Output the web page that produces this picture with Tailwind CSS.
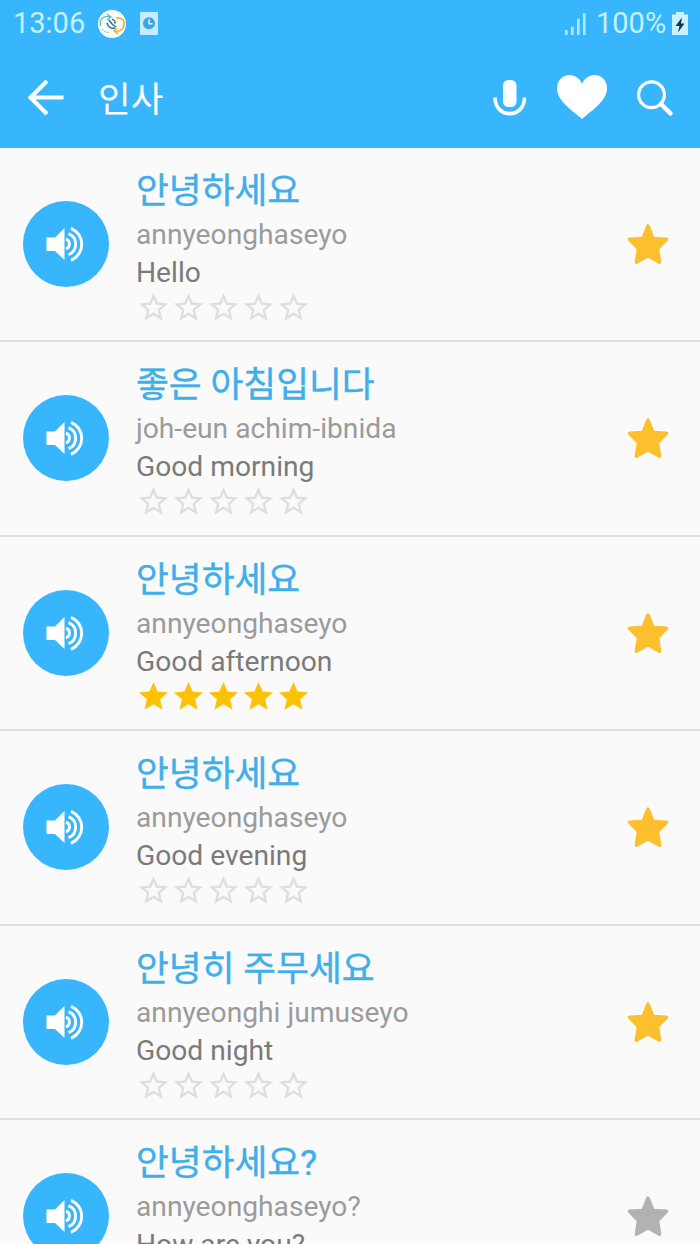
<!DOCTYPE html>
<html lang="ko">
<head>
    <meta charset="UTF-8">
    <meta name="viewport" content="width=device-width, initial-scale=1.0">
    <title>인사</title>
    <script src="https://cdn.jsdelivr.net/npm/@tailwindcss/browser@4"></script>
</head>
<body class="h-[1244px] overflow-hidden bg-[#fafafa] font-[Roboto,'Noto_Sans_CJK_KR',sans-serif]">
    <!-- Icon sprite -->
    <svg class="hidden">
        <symbol id="star" viewBox="0 0 24 24">
            <path d="M12 17.27L18.18 21l-1.64-7.03L22 9.24l-7.19-.61L12 2 9.19 8.63 2 9.24l5.46 4.73L5.82 21z"/>
        </symbol>
        <symbol id="star-outline" viewBox="0 0 24 24">
            <path d="M22 9.24l-7.19-.62L12 2 9.19 8.63 2 9.24l5.46 4.73L5.82 21 12 17.27 18.18 21l-1.63-7.03L22 9.24zM12 15.4l-3.76 2.27 1-4.28-3.32-2.88 4.38-.38L12 6.1l1.71 4.04 4.38.38-3.32 2.88 1 4.28L12 15.4z"/>
        </symbol>
        <symbol id="favorite" viewBox="0 0 42 42">
            <path d="M21 3L26 15.500L39.500 16.200L30.500 25.500L32.600 39.200L21 32.800L9.400 39.200L11.500 25.500L2.500 16.200L16 15.500Z" stroke="currentColor" stroke-width="3.500" stroke-linejoin="round"/>
        </symbol>
        <symbol id="speaker" viewBox="0 0 40 38">
            <path d="M.5 12.500H9L18.500 3v32L9 26H.5z" fill="currentColor"/>
            <path d="M20 14.200a5.200 5.200 0 0 1 0 9.800M22.500 8.700a11.300 11.300 0 0 1 0 21M25 3.300a17.300 17.300 0 0 1 0 32" fill="none" stroke="currentColor" stroke-width="2.900"/>
        </symbol>
    </svg>

    <!-- Header -->
    <header class="flex h-[148px] flex-col bg-[#38b6fd]">
        <div class="flex h-12 items-center pl-[13px] pr-3 text-[#c5f1ff]">
            <span class="w-[85px] whitespace-nowrap text-[29px]">13:06</span>
            <svg class="h-7 w-7" viewBox="0 0 28 28" fill="none">
                <circle cx="14" cy="14" r="14" fill="#fbfdf8"/>
                <path d="M2.500 16C1 8 7 5 12 7M9 4l4 3-4 3" stroke="#5fb9c9" stroke-width="1.300"/>
                <path d="M4 19c2 3 5 4 8 3" stroke="#8fcbd0" stroke-width="1.200" stroke-dasharray="2 1"/>
                <path d="M18 8c6-1 9 3 8 7-1 5-5 7-10 6M19 18l-3 3 4 3" stroke="#edb840" stroke-width="1.700"/>
                <path d="M9 13c1 4 4 6 8 5M11 10l3 4 4 3M14 9l3 2M16 13l2-1" stroke="#2e7198" stroke-width="1.500"/>
            </svg>
            <svg class="ml-[14px] h-6 w-[18px]" viewBox="0 0 18 24" fill="none">
                <rect width="18" height="23" rx="1.200" fill="#c5edff"/>
                <circle cx="9" cy="11.200" r="6" fill="#3fa4e0"/>
                <path d="M9 7.200v4.500h3.500" stroke="#e6faff" stroke-width="1.500"/>
            </svg>
            <svg class="ml-auto h-6 w-[23px]" viewBox="0 0 23 24" fill="#b0e8ff">
                <path d="M0 18h2.600v5H0zM6 14.500h2.600V23H6zM12 6.500h2.600V23H12zM18 1h2.600v22H18z"/>
            </svg>
            <span class="ml-[8px] w-[70px] whitespace-nowrap text-[29px]">100%</span>
            <svg class="ml-[6px] h-6 w-4" viewBox="0 0 16 24">
                <path d="M4 0h8v2.500h4V23H0V2.500h4z" fill="#c9f2ff"/>
                <path d="M10 5.500L3.500 14h4L6 20.500 12.500 11.500H9z" fill="#16354c"/>
            </svg>
        </div>
        <div class="flex h-[100px] items-center pl-7 pr-[26px] text-white">
            <svg class="h-9 w-9" viewBox="0 0 36 36" fill="none" stroke="currentColor" stroke-width="4.200">
                <path d="M35.500 17.500H3M19 1L2.500 17.500 19 34"/>
            </svg>
            <h1 class="ml-[34px] pt-1 text-[35.500px] leading-10">인사</h1>
            <svg class="ml-auto h-9 w-[34px]" viewBox="0 0 34 36">
                <rect x="11" y="0" width="13.500" height="27" rx="5.500" fill="currentColor"/>
                <path d="M3 17.500c0 21.500 29.500 21.500 29.500 0" fill="none" stroke="currentColor" stroke-width="3.600"/>
            </svg>
            <svg class="ml-[30px] h-[46px] w-[52px]" viewBox="0 0 52 46" fill="currentColor">
                <path d="M26 44C17 36 1 26 1 13.500 1 5.500 6.500 0 13.500 0 19 0 24 3.500 26 9 28 3.500 33 0 38.500 0 45.500 0 51 5.500 51 13.500 51 26 35 36 26 44z"/>
            </svg>
            <svg class="ml-[28px] h-[38px] w-[38px]" viewBox="0 0 38 38" fill="none" stroke="currentColor">
                <circle cx="15.500" cy="15.800" r="12.900" stroke-width="3.200"/>
                <path d="M25 25l9.500 9.500" stroke-width="4.500" stroke-linecap="round"/>
            </svg>
        </div>
    </header>

    <!-- Phrases -->
    <main id="phrase-list"></main>

    <script>
        const phrases = [
            { korean: '안녕하세요', roman: 'annyeonghaseyo', english: 'Hello', rated: false, favorite: true },
            { korean: '좋은 아침입니다', roman: 'joh-eun achim-ibnida', english: 'Good morning', rated: false, favorite: true },
            { korean: '안녕하세요', roman: 'annyeonghaseyo', english: 'Good afternoon', rated: true, favorite: true },
            { korean: '안녕하세요', roman: 'annyeonghaseyo', english: 'Good evening', rated: false, favorite: true },
            { korean: '안녕히 주무세요', roman: 'annyeonghi jumuseyo', english: 'Good night', rated: false, favorite: true },
            { korean: '안녕하세요?', roman: 'annyeonghaseyo?', english: 'How are you?', rated: false, favorite: false },
        ];

        const star = rated => rated
            ? '<svg class="h-[35px] w-[35px] fill-[#ffc107]"><use href="#star"/></svg>'
            : '<svg class="h-[35px] w-[35px] fill-[#dedede]"><use href="#star-outline"/></svg>';

        document.getElementById('phrase-list').innerHTML = phrases.map(p => `
            <div class="flex h-[194.400px] items-start border-b-2 border-[#dfdfdf] pl-[23px] pr-[31px]">
                <button class="mt-[53px] flex h-[86px] w-[86px] items-center justify-center rounded-full bg-[#38b6fd] text-white">
                    <svg class="h-[38px] w-10"><use href="#speaker"/></svg>
                </button>
                <div class="ml-[27px] flex-1 whitespace-nowrap pt-[23px]">
                    <h2 class="h-[45px] text-[35.700px] leading-[41px] text-[#40aee8] [-webkit-text-stroke:0.4px]">${p.korean}</h2>
                    <p class="text-[28.200px] leading-[38px] text-[#9b9b9b]">${p.roman}</p>
                    <p class="text-[28.200px] leading-[38px] text-[#7a7a7a]">${p.english}</p>
                    <div class="-mt-[2px] flex">${star(p.rated).repeat(5)}</div>
                </div>
                <svg class="mt-[75px] h-[42px] w-[42px] ${p.favorite ? 'fill-[#fcc02e] text-[#fcc02e]' : 'fill-[#b2b2b2] text-[#b2b2b2]'}"><use href="#favorite"/></svg>
            </div>`).join('');
    </script>
</body>
</html>
